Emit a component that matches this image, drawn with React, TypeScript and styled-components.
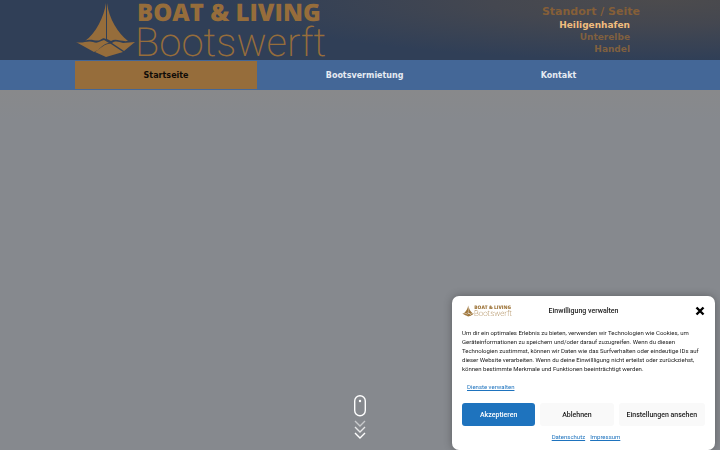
import React from "react";
import styled, { createGlobalStyle } from "styled-components";

const GlobalStyle = createGlobalStyle`
  * { box-sizing: border-box; }
  html, body { margin: 0; padding: 0; }
  body {
    background: #86898e;
    font-family: "DejaVu Sans", sans-serif;
    overflow: hidden;
  }
`;

const Page = styled.div`
  display: flex;
  flex-direction: column;
  min-height: 100vh;
`;

const Header = styled.header`
  background: radial-gradient(ellipse 60% 100% at 92% 0, #4c4b4d 0%, #444750 40%, rgba(48, 63, 87, 0) 100%), #303f57;
`;

const Container = styled.div`
  display: flex;
  justify-content: space-between;
  margin: 0 75px;
`;

const LogoLink = styled.a`
  display: block;
  height: 60px;
`;

const LogoDrawing = styled.svg`
  display: block;
  overflow: visible;
  text-rendering: geometricPrecision;
`;

const Locations = styled.nav`
  display: flex;
  flex-direction: column;
  align-items: flex-end;
  padding: 5px 5px 0 0;
`;

const LocationTitle = styled.span`
  color: #855f38;
  font-size: 11px;
  font-weight: 700;
  line-height: 14px;
`;

const LocationLink = styled.a<{ $active?: boolean }>`
  margin-right: 10px;
  color: ${(p) => (p.$active ? "#f0bd7e" : "#80603f")};
  font-size: 9px;
  font-weight: 700;
  line-height: 12px;
  text-decoration: none;
`;

const MainNav = styled.nav`
  background: #446797;
`;

const NavLink = styled.a<{ $active?: boolean }>`
  flex: 1 1 auto;
  height: 30px;
  border-top: 1px solid #446797;
  border-bottom: 1px solid #446797;
  background: ${(p) => (p.$active ? "#966d3b" : "transparent")};
  color: ${(p) => (p.$active ? "#100c08" : "#e6ebf2")};
  font-size: 8px;
  font-weight: 700;
  line-height: 30px;
  text-align: center;
  text-decoration: none;
`;

const Hero = styled.main`
  display: flex;
  flex: 1;
  align-items: flex-end;
  justify-content: center;
  padding-bottom: 8px;
  background: linear-gradient(#88898b, #86898e 30px);
`;

const ScrollLink = styled.a`
  display: block;
  height: 48px;
`;

const Dialog = styled.section`
  position: fixed;
  right: 5px;
  bottom: 0;
  display: flex;
  flex-direction: column;
  width: 263px;
  padding: 6px 10px 8px;
  border-radius: 7px;
  background: #fff;
  box-shadow: 0 0 8px rgba(0, 0, 0, 0.3);
  color: #222;
  font-family: Roboto, sans-serif;
`;

const DialogHeader = styled.header`
  display: grid;
  grid-template-columns: 1fr auto 1fr;
  align-items: center;
  height: 18px;
`;

const DialogTitle = styled.h2`
  margin: 0;
  font-size: 7px;
  font-weight: 500;
`;

const CloseButton = styled.button`
  justify-self: end;
  display: flex;
  padding: 0;
  border: 0;
  background: none;
`;

const Message = styled.p`
  margin: 8px 0 9px;
  font-size: 6px;
  line-height: 9px;
`;

const TextLink = styled.a`
  color: #1e73be;
  font-size: 6px;
  line-height: 10px;
`;

const Services = styled.div`
  display: flex;
  padding-left: 5px;
`;

const Buttons = styled.div`
  display: flex;
  gap: 5px;
  margin: 11px 0 6px;
`;

const Button = styled.button<{ $primary?: boolean }>`
  flex: 1 1 73px;
  height: 23px;
  padding: 0;
  border: 0;
  border-radius: 3px;
  background: ${(p) => (p.$primary ? "#1e73be" : "#f9f9f9")};
  color: ${(p) => (p.$primary ? "#fff" : "#222")};
  font-family: inherit;
  font-size: 7px;
  font-weight: 500;
  white-space: nowrap;

  &:last-child { flex-basis: 86px; }
`;

const Documents = styled.div`
  display: flex;
  justify-content: center;
  gap: 5px;
  padding-left: 5px;
`;

function Logo({ width, height, color }: { width: number; height: number; color: string }) {
  return (
    <LogoDrawing width={width} height={height} viewBox="0 0 251 60" fill={color} role="img" aria-label="Boat & Living Bootswerft">
      <path d="M31 3C29 17 21 33 10 41C16 38 21 42 25 40C28 38 29 38 31 39Z" />
      <path d="M32 3V39L36 41C41 38 46 42 53 41C43 33 34 19 32 3Z" />
      <path d="M1 42C7 44 13 40 18 42C23 44 25 41 29 40L34 43C30 43 26 47 23 50L19 52Z" />
      <path d="M20 52C26 48 31 43 36 44L48 52L31 57Z" />
      <path d="M37 43C41 40 44 42 48 43C52 43 56 42 60 42L49 51Z" />
      <text x="62" y="21" fontFamily="'Open Sans', sans-serif" fontSize="24" fontWeight="800">BOAT &amp; LIVING</text>
      <text x="60" y="56" fontFamily="Roboto, sans-serif" fontSize="40" fontWeight="200">Bootswerft</text>
    </LogoDrawing>
  );
}

function ScrollIcon() {
  return (
    <svg width="14" height="48" viewBox="0 0 14 48" fill="none" stroke="#fff" aria-hidden="true">
      <rect x="1.7" y="1.7" width="10.6" height="20" rx="5.3" strokeWidth="1.4" />
      <circle cx="7" cy="7" r="1.2" fill="#fff" stroke="none" />
      <g strokeWidth="1.4">
        <path d="M2 27L7 32L12 27" opacity=".55" />
        <path d="M2 33L7 38L12 33" opacity=".8" />
        <path d="M2 39L7 44L12 39" />
      </g>
    </svg>
  );
}

export default function App() {
  return (
    <>
      <GlobalStyle />
      <Page>
        <Header>
          <Container>
            <LogoLink href="#"><Logo width={251} height={60} color="#966d3b" /></LogoLink>
            <Locations aria-label="Standort / Seite">
              <LocationTitle>Standort / Seite</LocationTitle>
              <LocationLink href="#heiligenhafen" $active>Heiligenhafen</LocationLink>
              <LocationLink href="#unterelbe">Unterelbe</LocationLink>
              <LocationLink href="#handel">Handel</LocationLink>
            </Locations>
          </Container>
        </Header>
        <MainNav>
          <Container>
            <NavLink href="#start" $active>Startseite</NavLink>
            <NavLink href="#vermietung">Bootsvermietung</NavLink>
            <NavLink href="#kontakt">Kontakt</NavLink>
          </Container>
        </MainNav>
        <Hero>
          <ScrollLink href="#inhalt" aria-label="Nach unten scrollen"><ScrollIcon /></ScrollLink>
        </Hero>
      </Page>
      <Dialog role="dialog" aria-labelledby="consent-title">
        <DialogHeader>
          <Logo width={50} height={12} color="#a0783e" />
          <DialogTitle id="consent-title">Einwilligung verwalten</DialogTitle>
          <CloseButton type="button" aria-label="Dialog schließen">
            <svg width="10" height="10" viewBox="0 0 10 10" stroke="#000" strokeWidth="2.4" aria-hidden="true">
              <path d="M1.5 1.5L8.5 8.5M8.5 1.5L1.5 8.5" />
            </svg>
          </CloseButton>
        </DialogHeader>
        <Message>
          Um dir ein optimales Erlebnis zu bieten, verwenden wir Technologien wie Cookies, um
          Geräteinformationen zu speichern und/oder darauf zuzugreifen. Wenn du diesen
          Technologien zustimmst, können wir Daten wie das Surfverhalten oder eindeutige IDs auf
          dieser Website verarbeiten. Wenn du deine Einwillligung nicht erteilst oder zurückziehst,
          können bestimmte Merkmale und Funktionen beeinträchtigt werden.
        </Message>
        <Services><TextLink href="#dienste">Dienste verwalten</TextLink></Services>
        <Buttons>
          <Button type="button" $primary>Akzeptieren</Button>
          <Button type="button">Ablehnen</Button>
          <Button type="button">Einstellungen ansehen</Button>
        </Buttons>
        <Documents>
          <TextLink href="#datenschutz">Datenschutz</TextLink>
          <TextLink href="#impressum">Impressum</TextLink>
        </Documents>
      </Dialog>
    </>
  );
}
